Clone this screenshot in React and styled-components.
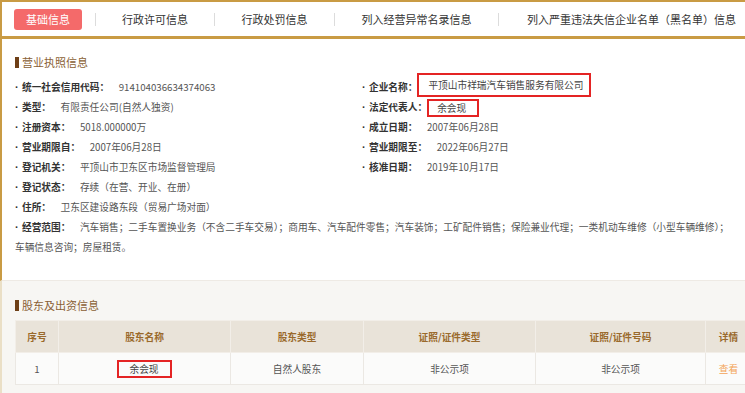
import React from "react";
import styled, { createGlobalStyle } from "styled-components";

const GlobalStyle = createGlobalStyle`
  html, body {
    margin: 0;
    padding: 0;
    background: #fff;
    overflow: hidden;
  }
  body {
    font-family: "Noto Sans CJK SC", "Noto Sans", sans-serif;
    width: 745px;
    height: 393px;
  }
`;

const GOLD = "#c99b44";

const Page = styled.div`
  width: 745px;
  height: 393px;
  display: flex;
  flex-direction: column;
  overflow: hidden;
`;

const TabBar = styled.nav`
  height: 34px;
  border-top: 2px solid ${GOLD};
  border-bottom: 3px solid ${GOLD};
  border-left: 2px solid ${GOLD};
  display: flex;
  align-items: center;
  padding-left: 12px;
  background: #fff;
  white-space: nowrap;
  flex-shrink: 0;
  overflow: hidden;
`;

const ActiveTab = styled.div`
  flex: 0 0 68px;
  height: 21px;
  line-height: 21px;
  border-radius: 3px;
  background: #f46a6a;
  color: #fff;
  font-size: 11px;
  text-align: center;
  margin-right: 13px;
`;

const Sep = styled.span`
  flex: 0 0 1px;
  height: 13px;
  background: #dcdcdc;
`;

const Tab = styled.div`
  flex: 0 0 ${(p) => (p.$w ? `${p.$w}px` : "auto")};
  padding-left: ${(p) => (p.$w ? 0 : 28)}px;
  text-align: center;
  font-size: 11px;
  color: #333;
`;

const Panel = styled.section`
  border-left: 2px solid ${GOLD};
  background: #fff;
  padding: 13px 0 23px 13px;
  flex-shrink: 0;
  border-bottom: 1px solid #eeeae4;
`;

const Gray = styled.section`
  flex: 1;
  border-left: 2px solid #eadfc6;
  background: #f7f6f3;
  padding: 14px 0 0 13px;
`;

const Title = styled.h3`
  margin: 0 0 5px;
  height: 20px;
  display: flex;
  align-items: center;
  font-size: 11px;
  font-weight: normal;
  color: #8a5f35;
  &::before {
    content: "";
    width: 4px;
    height: 11px;
    background: #6e3f17;
    margin-right: 3px;
  }
`;

const Grid = styled.div`
  display: grid;
  grid-template-columns: 345px 1fr;
  font-size: 9.7px;
`;

const Row = styled.div`
  display: flex;
  align-items: center;
  height: 20px;
  white-space: nowrap;
  color: #555;
  padding-left: ${(p) => (p.$right ? "2px" : "0")};
`;

const Dot = styled.span`
  display: inline-block;
  width: 7px;
  font-family: "Liberation Sans", Arial, sans-serif;
  font-size: 11px;
  color: #333;
  font-weight: bold;
`;

const Label = styled.b`
  color: #333;
  font-weight: bold;
`;

const Value = styled.span`
  margin-left: 9.5px;
`;

const RedBox = styled.span`
  display: inline-flex;
  align-items: center;
  box-sizing: border-box;
  border: 2px solid #e42424;
  height: ${(p) => p.$h}px;
  padding: 0 ${(p) => p.$pr}px 0 ${(p) => p.$pl}px;
  margin-top: ${(p) => p.$up}px;
  color: #444;
`;

const Scope = styled.div`
  grid-column: 1 / span 2;
  line-height: 20px;
  color: #555;
  width: 722px;
`;

const Table = styled.table`
  width: 736px;
  border-collapse: collapse;
  table-layout: fixed;
  font-size: 9.7px;
`;

const Th = styled.th`
  height: 31px;
  background: #e9e3d9;
  color: #9a6a2c;
  font-weight: bold;
  border: 1px solid #f2eee8;
  padding: 0;
`;

const Td = styled.td`
  height: 31px;
  background: #fbfbfa;
  color: ${(p) => (p.$link ? "#f3a457" : "#555")};
  border: 1px solid #ebe8e3;
  text-align: center;
  padding: 0;
`;

const basic = [
  ["统一社会信用代码：", "914104036634374063", "企业名称：", "平顶山市祥瑞汽车销售服务有限公司"],
  ["类型：", "有限责任公司(自然人独资)", "法定代表人：", "余会现"],
  ["注册资本：", "5018.000000万", "成立日期：", "2007年06月28日"],
  ["营业期限自：", "2007年06月28日", "营业期限至：", "2022年06月27日"],
  ["登记机关：", "平顶山市卫东区市场监督管理局", "核准日期：", "2019年10月17日"],
  ["登记状态：", "存续（在营、开业、在册）"],
  ["住所：", "卫东区建设路东段（贸易广场对面）"],
];

const cols = [
  ["序号", 43],
  ["股东名称", 172],
  ["股东类型", 133],
  ["证照/证件类型", 172],
  ["证照/证件号码", 170],
  ["详情", 46],
];

function RightValue({ label, value }) {
  if (label === "企业名称：") {
    return (
      <RedBox $h={24} $pl={9} $pr={6} $up={-4}>
        {value}
      </RedBox>
    );
  }
  if (label === "法定代表人：") {
    return (
      <RedBox $h={18} $pl={8} $pr={11} $up={2}>
        {value}
      </RedBox>
    );
  }
  return <Value>{value}</Value>;
}

export default function App() {
  return (
    <Page>
      <GlobalStyle />
      <TabBar>
        <ActiveTab>基础信息</ActiveTab>
        <Sep />
        <Tab $w={118}>行政许可信息</Tab>
        <Sep />
        <Tab $w={119}>行政处罚信息</Tab>
        <Sep />
        <Tab $w={163}>列入经营异常名录信息</Tab>
        <Sep />
        <Tab>列入严重违法失信企业名单（黑名单）信息</Tab>
      </TabBar>

      <Panel>
        <Title>营业执照信息</Title>
        <Grid>
          {basic.map(([l1, v1, l2, v2]) => (
            <React.Fragment key={l1}>
              <Row>
                <Dot>·</Dot>
                <Label>{l1}</Label>
                <Value>{v1}</Value>
              </Row>
              <Row $right>
                {l2 && <Dot>·</Dot>}
                {l2 && <Label>{l2}</Label>}
                {l2 && <RightValue label={l2} value={v2} />}
              </Row>
            </React.Fragment>
          ))}
          <Scope>
            <Dot>·</Dot>
            <Label>经营范围：</Label>
            <Value>
              汽车销售；二手车置换业务（不含二手车交易）；商用车、汽车配件零售；汽车装饰；工矿配件销售；保险兼业代理；一类机动车维修（小型车辆维修）；车辆信息咨询；房屋租赁。
            </Value>
          </Scope>
        </Grid>
      </Panel>

      <Gray>
        <Title>股东及出资信息</Title>
        <Table>
          <colgroup>
            {cols.map(([name, w]) => (
              <col key={name} style={{ width: w }} />
            ))}
          </colgroup>
          <thead>
            <tr>
              {cols.map(([name]) => (
                <Th key={name}>{name}</Th>
              ))}
            </tr>
          </thead>
          <tbody>
            <tr>
              <Td>1</Td>
              <Td>
                <RedBox $h={18} $pl={10} $pr={11} $up={0}>
                  余会现
                </RedBox>
              </Td>
              <Td>自然人股东</Td>
              <Td>非公示项</Td>
              <Td>非公示项</Td>
              <Td $link>查看</Td>
            </tr>
          </tbody>
        </Table>
      </Gray>
    </Page>
  );
}
